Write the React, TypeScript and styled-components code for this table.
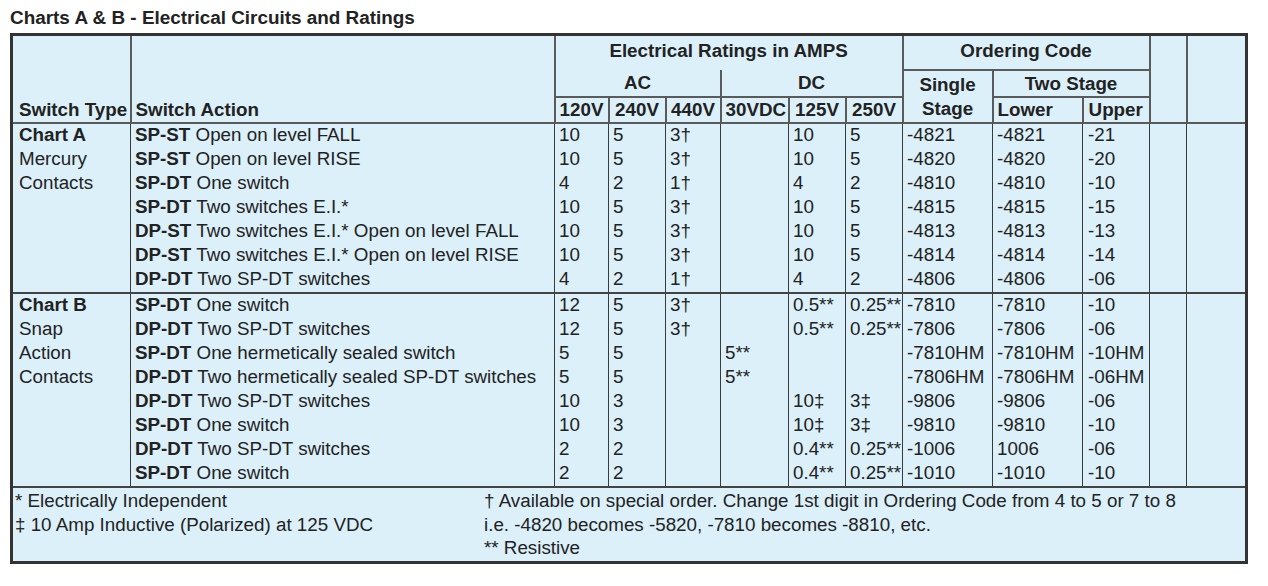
import React from "react";
import styled, { createGlobalStyle } from "styled-components";

const Global = createGlobalStyle`
  html, body { margin: 0; padding: 0; background: #ffffff; }
  body { font-family: "Liberation Sans", Arial, Helvetica, sans-serif; color: #222; }
`;

const Page = styled.div`
  padding: 7px 0 0 10px;
`;

const Title = styled.h1`
  margin: 0 0 4px 0;
  font-size: 18.9px;
  line-height: 22px;
  font-weight: 700;
  color: #222;
`;

const Table = styled.table`
  border-collapse: collapse;
  table-layout: fixed;
  width: 1235px;
  background: #dcf0fa;
  border: 3px solid #333;
  font-size: 18.8px;
  color: #222;
`;

const HeadCell = styled.th<{ $align?: "left" | "center"; $valign?: "top" | "middle" | "bottom"; $noBottom?: boolean; $noTop?: boolean; $h?: number; $padTop?: number }>`
  border: 2px solid #5a5a5a;
  ${(p) => (p.$noBottom ? "border-bottom: hidden;" : "")}
  ${(p) => (p.$noTop ? "border-top: hidden;" : "")}
  text-align: ${(p) => p.$align || "center"};
  vertical-align: ${(p) => p.$valign || "middle"};
  font-weight: 700;
  padding: ${(p) => p.$padTop ?? 0}px 4px 0 4px;
  line-height: 24px;
  height: ${(p) => (p.$h ? `${p.$h}px` : "auto")};
  white-space: nowrap;
  overflow: visible;
`;

const HeadRow = styled.tr``;

const BodyRow = styled.tr<{ $groupStart?: boolean }>`
  & > td {
    ${(p) => (p.$groupStart ? "border-top: 2px solid #444;" : "")}
  }
`;

const Cell = styled.td<{ $pad?: number; $bold?: boolean }>`
  border-left: 1px solid #3a3a3a;
  border-right: 1px solid #3a3a3a;
  padding: 0 0 0 ${(p) => (p.$pad ?? 4)}px;
  line-height: 22px;
  height: 24px;
  white-space: nowrap;
  overflow: visible;
  font-weight: ${(p) => (p.$bold ? 700 : 400)};
  vertical-align: top;
`;

const Code = styled.b`
  font-weight: 700;
`;

const FooterCell = styled.td`
  border-top: 2px solid #444;
  padding: 1px 0 1px 2px;
`;

const FooterGrid = styled.div`
  display: grid;
  grid-template-columns: 469px 1fr;
  line-height: 23.5px;
  white-space: nowrap;
`;

const FooterCol = styled.div`
  display: flex;
  flex-direction: column;
`;

type Row = {
  type: string;
  typeBold?: boolean;
  code: string;
  action: string;
  v: string[];
};

const chartA: Row[] = [
  { type: "Chart A", typeBold: true, code: "SP-ST", action: "Open on level FALL", v: ["10", "5", "3†", "", "10", "5", "-4821", "-4821", "-21"] },
  { type: "Mercury", code: "SP-ST", action: "Open on level RISE", v: ["10", "5", "3†", "", "10", "5", "-4820", "-4820", "-20"] },
  { type: "Contacts", code: "SP-DT", action: "One switch", v: ["4", "2", "1†", "", "4", "2", "-4810", "-4810", "-10"] },
  { type: "", code: "SP-DT", action: "Two switches E.I.*", v: ["10", "5", "3†", "", "10", "5", "-4815", "-4815", "-15"] },
  { type: "", code: "DP-ST", action: "Two switches E.I.* Open on level FALL", v: ["10", "5", "3†", "", "10", "5", "-4813", "-4813", "-13"] },
  { type: "", code: "DP-ST", action: "Two switches E.I.* Open on level RISE", v: ["10", "5", "3†", "", "10", "5", "-4814", "-4814", "-14"] },
  { type: "", code: "DP-DT", action: "Two SP-DT switches", v: ["4", "2", "1†", "", "4", "2", "-4806", "-4806", "-06"] },
];

const chartB: Row[] = [
  { type: "Chart B", typeBold: true, code: "SP-DT", action: "One switch", v: ["12", "5", "3†", "", "0.5**", "0.25**", "-7810", "-7810", "-10"] },
  { type: "Snap", code: "DP-DT", action: "Two SP-DT switches", v: ["12", "5", "3†", "", "0.5**", "0.25**", "-7806", "-7806", "-06"] },
  { type: "Action", code: "SP-DT", action: "One hermetically sealed switch", v: ["5", "5", "", "5**", "", "", "-7810HM", "-7810HM", "-10HM"] },
  { type: "Contacts", code: "DP-DT", action: "Two hermetically sealed SP-DT switches", v: ["5", "5", "", "5**", "", "", "-7806HM", "-7806HM", "-06HM"] },
  { type: "", code: "DP-DT", action: "Two SP-DT switches", v: ["10", "3", "", "", "10‡", "3‡", "-9806", "-9806", "-06"] },
  { type: "", code: "SP-DT", action: "One switch", v: ["10", "3", "", "", "10‡", "3‡", "-9810", "-9810", "-10"] },
  { type: "", code: "DP-DT", action: "Two SP-DT switches", v: ["2", "2", "", "", "0.4**", "0.25**", "-1006", "1006", "-06"] },
  { type: "", code: "SP-DT", action: "One switch", v: ["2", "2", "", "", "0.4**", "0.25**", "-1010", "-1010", "-10"] },
];

const widths = [119, 424, 54, 57, 55, 68, 57, 57, 90, 90, 67, 37, 60];

function renderGroup(rows: Row[]) {
  return rows.map((r, i) => (
    <BodyRow key={r.code + r.action + i} $groupStart={i === 0}>
      <Cell $pad={6} $bold={r.typeBold}>{r.type}</Cell>
      <Cell>
        <Code>{r.code}</Code> {r.action}
      </Cell>
      {r.v.map((val, j) => (
        <Cell key={j} $pad={j === 8 ? 5 : 4}>{val}</Cell>
      ))}
      <Cell />
      <Cell />
    </BodyRow>
  ));
}

export default function App() {
  return (
    <Page>
      <Global />
      <Title>Charts A &amp; B - Electrical Circuits and Ratings</Title>
      <Table>
        <colgroup>
          {widths.map((w, i) => (
            <col key={i} style={{ width: w }} />
          ))}
        </colgroup>
        <thead>
          <HeadRow>
            <HeadCell rowSpan={3} $align="left" $valign="bottom" style={{ paddingLeft: 6 }}>Switch Type</HeadCell>
            <HeadCell rowSpan={3} $align="left" $valign="bottom">Switch Action</HeadCell>
            <HeadCell colSpan={6} $noBottom $h={30} $valign="top" $padTop={3}>Electrical Ratings in AMPS</HeadCell>
            <HeadCell colSpan={3} $h={30} $valign="top" $padTop={3}>Ordering Code</HeadCell>
            <HeadCell rowSpan={3} />
            <HeadCell rowSpan={3} />
          </HeadRow>
          <HeadRow>
            <HeadCell colSpan={3} $noTop $h={25}>AC</HeadCell>
            <HeadCell colSpan={3} $noTop $h={25}>DC</HeadCell>
            <HeadCell rowSpan={2}>Single<br />Stage</HeadCell>
            <HeadCell colSpan={2} $h={25}>Two Stage</HeadCell>
          </HeadRow>
          <HeadRow>
            <HeadCell $h={24}>120V</HeadCell>
            <HeadCell $h={24}>240V</HeadCell>
            <HeadCell $h={24}>440V</HeadCell>
            <HeadCell $h={24}>30VDC</HeadCell>
            <HeadCell $h={24}>125V</HeadCell>
            <HeadCell $h={24}>250V</HeadCell>
            <HeadCell $h={24} $align="left">Lower</HeadCell>
            <HeadCell $h={24} $align="left" style={{ paddingLeft: 5 }}>Upper</HeadCell>
          </HeadRow>
        </thead>
        <tbody>
          {renderGroup(chartA)}
          {renderGroup(chartB)}
          <tr>
            <FooterCell colSpan={13}>
              <FooterGrid>
                <FooterCol>
                  <span>* Electrically Independent</span>
                  <span>‡ 10 Amp Inductive (Polarized) at 125 VDC</span>
                </FooterCol>
                <FooterCol>
                  <span>† Available on special order. Change 1st digit in Ordering Code from 4 to 5 or 7 to 8</span>
                  <span>i.e. -4820 becomes -5820, -7810 becomes -8810, etc.</span>
                  <span>** Resistive</span>
                </FooterCol>
              </FooterGrid>
            </FooterCell>
          </tr>
        </tbody>
      </Table>
    </Page>
  );
}
